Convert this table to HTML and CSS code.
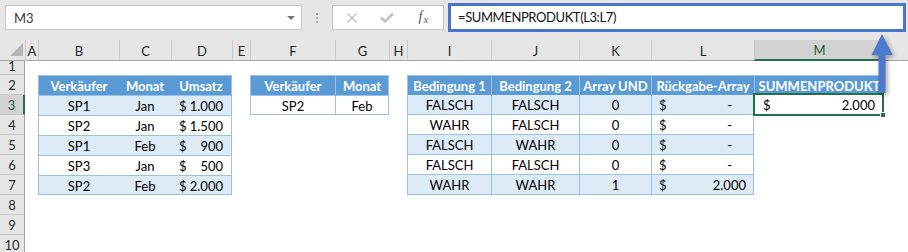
FILE: index.html
```html
<!DOCTYPE html>
<html lang="de">
<head>
<meta charset="utf-8">
<title>SUMMENPRODUKT</title>
<link rel="stylesheet" href="styles.css">
</head>
<body>
<div class="app">
  <div class="topbar">
    <div class="namebox"><span>M3</span><span class="dd"></span></div>
    <div class="dots"><i></i><i></i><i></i></div>
    <div class="fbtns">
      <span class="slot s1"><svg width="12" height="10" viewBox="0 0 12 10"><path d="M1.5 0.5 L10.5 9.5 M10.5 0.5 L1.5 9.5" stroke="#c4c4c4" stroke-width="1.6" fill="none"/></svg></span>
      <span class="slot s2"><svg width="14" height="11" viewBox="0 0 14 11"><path d="M1 5.5 L5 9.5 L13 1.5" stroke="#c4c4c4" stroke-width="2.6" fill="none"/></svg></span>
      <span class="slot s3 fx">f<span class="fxx">x</span></span>
    </div>
    <div class="formula">=SUMMENPRODUKT(L3:L7)</div>
  </div>

  <div class="sheet">
    <div class="ch corner"><span class="tri"></span></div>
    <div class="ch">A</div>
    <div class="ch">B</div>
    <div class="ch">C</div>
    <div class="ch">D</div>
    <div class="ch">E</div>
    <div class="ch">F</div>
    <div class="ch">G</div>
    <div class="ch">H</div>
    <div class="ch">I</div>
    <div class="ch">J</div>
    <div class="ch">K</div>
    <div class="ch">L</div>
    <div class="ch sel">M</div>
    <div class="ch rest"></div>

    <div class="rowheads">
      <div class="rh r1">1</div>
      <div class="rh">2</div>
      <div class="rh sel">3</div>
      <div class="rh">4</div>
      <div class="rh">5</div>
      <div class="rh">6</div>
      <div class="rh">7</div>
      <div class="rh">8</div>
      <div class="rh">9</div>
      <div class="rh">10</div>
    </div>

    <div class="t1">
      <div class="th">Verkäufer</div><div class="th">Monat</div><div class="th">Umsatz</div>
      <div class="td band">SP1</div><div class="td band">Jan</div><div class="td band acc"><span>$</span><span>1.000</span></div>
      <div class="td">SP2</div><div class="td">Jan</div><div class="td acc"><span>$</span><span>1.500</span></div>
      <div class="td band">SP1</div><div class="td band">Feb</div><div class="td band acc"><span>$</span><span>900</span></div>
      <div class="td">SP3</div><div class="td">Jan</div><div class="td acc"><span>$</span><span>500</span></div>
      <div class="td band">SP2</div><div class="td band">Feb</div><div class="td band acc"><span>$</span><span>2.000</span></div>
    </div>

    <div class="t2">
      <div class="th">Verkäufer</div><div class="th sep">Monat</div>
      <div class="td">SP2</div><div class="td sep">Feb</div>
    </div>

    <div class="t3">
      <div class="th">Bedingung 1</div><div class="th">Bedingung 2</div><div class="th">Array UND</div><div class="th">Rückgabe-Array</div><div class="th">SUMMENPRODUKT</div>

      <div class="td band">FALSCH</div><div class="td band">FALSCH</div><div class="td band">0</div><div class="td band acc last"><span>$</span><span class="dash">-</span></div>
      <div class="m3"><span>$</span><span>2.000</span><i class="handle"></i></div>

      <div class="td">WAHR</div><div class="td">FALSCH</div><div class="td">0</div><div class="td acc last"><span>$</span><span class="dash">-</span></div><div class="empty"></div>

      <div class="td band">FALSCH</div><div class="td band">WAHR</div><div class="td band">0</div><div class="td band acc last"><span>$</span><span class="dash">-</span></div><div class="empty"></div>

      <div class="td">FALSCH</div><div class="td">FALSCH</div><div class="td">0</div><div class="td acc last"><span>$</span><span class="dash">-</span></div><div class="empty"></div>

      <div class="td band">WAHR</div><div class="td band">WAHR</div><div class="td band">1</div><div class="td band acc last"><span>$</span><span>2.000</span></div><div class="empty"></div>
    </div>
  </div>

  <svg class="arrow" width="40" height="80" viewBox="0 0 40 80">
    <path d="M16 4 L26.5 25 L19.5 25 L19.5 63 L12.5 63 L12.5 25 L5.5 25 Z" fill="#4a7bce"/>
  </svg>
</div>
</body>
</html>
```

FILE: styles.css
```css
* {
  box-sizing: border-box;
  margin: 0;
  padding: 0;
}

body {
  margin: 0;
  background: #ffffff;
  font-family: Lato, "Open Sans", sans-serif;
}

.app {
  position: relative;
  width: 908px;
  height: 252px;
  overflow: hidden;
  background: #ffffff;
}

/* ---------- formula bar ---------- */
.topbar {
  height: 40px;
  background: #e6e6e6;
  display: flex;
  align-items: flex-start;
  padding: 5px 0 0 5px;
}

.namebox {
  width: 297px;
  height: 25px;
  background: #ffffff;
  border: 1px solid #c6c6c6;
  display: flex;
  align-items: center;
  justify-content: space-between;
  padding: 0 6px 0 8px;
  font-size: 13px;
  color: #3a3a3a;
}

.dd {
  width: 0;
  height: 0;
  border-left: 4px solid transparent;
  border-right: 4px solid transparent;
  border-top: 4px solid #777777;
}

.dots {
  width: 30px;
  display: flex;
  flex-direction: column;
  align-items: center;
  gap: 2px;
  padding-top: 8px;
}

.dots i {
  display: block;
  width: 2px;
  height: 2px;
  background: #a8a8a8;
}

.fbtns {
  width: 112px;
  height: 25px;
  background: #ffffff;
  border: 1px solid #c6c6c6;
  display: flex;
  align-items: center;
}

.slot {
  display: flex;
  align-items: center;
  justify-content: center;
  height: 100%;
}

.s1 { width: 37px; }
.s2 { width: 34px; }
.s3 { width: 39px; }

.fx {
  font-family: "Liberation Serif", "DejaVu Serif", serif;
  font-style: italic;
  font-size: 14px;
  color: #555555;
  padding-bottom: 2px;
}

.fxx {
  font-size: 11px;
  position: relative;
  top: 2px;
  margin-left: 1px;
}

.formula {
  margin-top: -2px;
  margin-left: 4px;
  width: 458px;
  height: 29px;
  border: 3px solid #4775c9;
  background: #ffffff;
  padding-left: 7px;
  font-size: 13px;
  letter-spacing: -0.4px;
  line-height: 22px;
  color: #111111;
}

/* ---------- sheet grid ---------- */
.sheet {
  display: grid;
  grid-template-columns: 25px 13px 81px 52px 61px 18px 85px 54px 18px 84px 88px 72px 103px 130px 1fr;
  grid-template-rows: 21px 14px repeat(9, 20px);
}

.ch {
  background: #e6e6e6;
  border-left: 1px solid #c8c8c8;
  border-bottom: 1px solid #a5a5a5;
  font-size: 13px;
  color: #262626;
  display: flex;
  align-items: center;
  justify-content: center;
  padding-top: 1px;
}

.ch.corner {
  border-left: none;
  position: relative;
}

.tri {
  position: absolute;
  left: 10px;
  top: 3px;
  width: 0;
  height: 0;
  border-left: 13px solid transparent;
  border-bottom: 13px solid #b5b5b5;
}

.ch.sel {
  background: #d2d2d2;
  border-bottom: 2px solid #217346;
  color: #1d5c3a;
}

.ch.rest {
  border-left: none;
}

.rowheads {
  grid-column: 1;
  grid-row: 2 / -1;
  display: flex;
  flex-direction: column;
}

.rh {
  height: 20px;
  flex: none;
  background: #e6e6e6;
  border-bottom: 1px solid #c8c8c8;
  border-right: 1px solid #a5a5a5;
  font-size: 13px;
  color: #262626;
  display: flex;
  align-items: center;
  justify-content: center;
}

.rh.r1 {
  height: 14px;
  align-items: flex-end;
}

.rh.sel {
  background: #d2d2d2;
  border-right: 2px solid #217346;
  color: #1d5c3a;
}

/* ---------- tables ---------- */
.th {
  background: #5b9bd5;
  color: #ffffff;
  font-weight: 700;
  font-size: 13px;
  display: flex;
  align-items: center;
  justify-content: center;
  white-space: nowrap;
  padding-top: 1px;
}

.td {
  font-size: 13px;
  color: #000000;
  display: flex;
  align-items: center;
  justify-content: center;
  background: #ffffff;
  padding-top: 1px;
}

.td.band {
  background: #ddebf7;
}

.acc {
  justify-content: space-between;
  padding-left: 8px;
  padding-right: 8px;
}

.t1 {
  grid-column: 3 / 6;
  grid-row: 3 / 9;
  display: grid;
  grid-template-columns: 80px 52px 60px;
  grid-template-rows: 19px repeat(4, 20px) 19px;
  border: 1px solid #9bc2e6;
  height: 120px;
  overflow: hidden;
}

.t1 .td {
  border-top: 1px solid #9bc2e6;
}

.t2 {
  grid-column: 7 / 9;
  grid-row: 3 / 5;
  display: grid;
  grid-template-columns: 84px 53px;
  grid-template-rows: 19px 20px;
  border: 1px solid #9bc2e6;
  height: 40px;
  overflow: hidden;
}

.t2 .td {
  border-top: 1px solid #9bc2e6;
}

.t2 .sep {
  border-left: 1px solid #9bc2e6;
}

.t3 {
  grid-column: 10 / 15;
  grid-row: 3 / 9;
  display: grid;
  grid-template-columns: 84px 88px 72px 103px 130px;
  grid-template-rows: repeat(6, 20px);
}

.t3 .th {
  border-top: 1px solid #9bc2e6;
  border-left: 1px solid #9bc2e6;
}

.t3 .td {
  border-left: 1px solid #9bc2e6;
  border-bottom: 1px solid #9bc2e6;
}

.t3 .td.last {
  border-right: 1px solid #9bc2e6;
  padding-left: 7px;
  padding-right: 7px;
}

.dash {
  margin-right: 14px;
}

.m3 {
  position: relative;
  margin: -2px 0 -1px -1px;
  border: 2px solid #217346;
  background: #ffffff;
  font-size: 13px;
  display: flex;
  align-items: center;
  justify-content: space-between;
  padding: 1px 7px 0 8px;
  z-index: 2;
}

.handle {
  position: absolute;
  right: -4px;
  bottom: -4px;
  width: 6px;
  height: 6px;
  background: #217346;
  border: 1px solid #ffffff;
}

.empty {
  background: transparent;
}

/* ---------- annotation arrow ---------- */
.arrow {
  position: absolute;
  left: 866px;
  top: 30px;
  filter: drop-shadow(2px 2px 2px rgba(0, 0, 0, 0.35));
  z-index: 5;
}
```
